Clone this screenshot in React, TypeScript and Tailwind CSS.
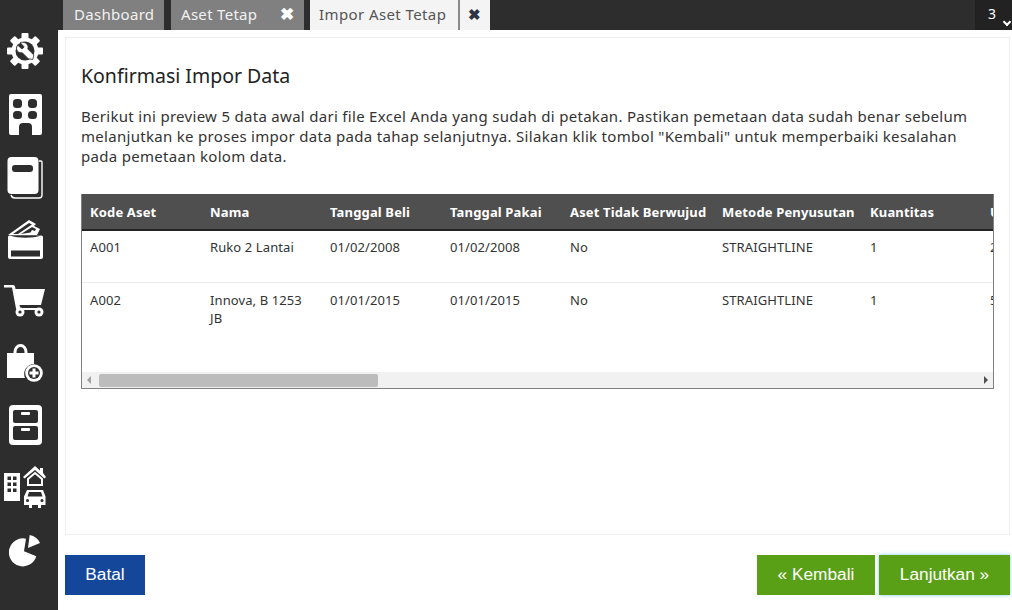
import React from "react";

const W = "#ffffff";
const D = "#2d2d2d";

function Gear() {
  const teeth = [0, 45, 90, 135, 180, 225, 270, 315];
  return (
    <svg width="36" height="36" viewBox="0 0 36 36">
      {teeth.map((a) => (
        <rect key={a} x="14.5" y="0" width="7" height="8" rx="1" fill={W} transform={`rotate(${a} 18 18)`} />
      ))}
      <circle cx="18" cy="18" r="13.500" fill={W} />
      <circle cx="18" cy="18" r="9.500" fill={D} />
      <path d="M10.500 12l4.500 4 2.200-2-4-4.500c3.300-1 7.300.5 7.800 4 .2 1 0 2-.2 2.500l6 6-1 4.500-4.500-.8-6-6c-3 .8-7.800-2-4.800-7.700z" fill={W} stroke={D} strokeWidth="0.8" />
    </svg>
  );
}
function Building() {
  return (
    <svg width="33" height="41" viewBox="0 0 33 41">
      <path d="M2 0h29a2 2 0 0 1 2 2v37a2 2 0 0 1-2 2h-8V33a4 4 0 0 0-4-4h-5a4 4 0 0 0-4 4v8H2a2 2 0 0 1-2-2V2a2 2 0 0 1 2-2z" fill={W} />
      <rect x="4" y="5" width="9" height="9" rx="3.500" fill={D} />
      <rect x="19" y="5" width="9" height="9" rx="3.500" fill={D} />
      <rect x="4" y="17" width="9" height="8" rx="3.500" fill={D} />
      <rect x="19" y="17" width="9" height="8" rx="3.500" fill={D} />
    </svg>
  );
}
function Book() {
  return (
    <svg width="36" height="42" viewBox="0 0 36 42">
      <path d="M32 4h2a1 1 0 0 1 1 1v33a3 3 0 0 1-3 3H8a4 4 0 0 1-4-3" fill="none" stroke={W} strokeWidth="1.400" />
      <rect x="0.500" y="0" width="31" height="37" rx="4" fill={W} />
      <rect x="5" y="8" width="21" height="7" rx="3" fill={D} />
    </svg>
  );
}
function Wallet() {
  return (
    <svg width="35" height="39" viewBox="0 0 35 39">
      <path d="M0 15L21 0l7 4-2 2 6 3-3 6z" fill={W} />
      <path d="M5 14L21 3l3 1.500L10 14z" fill={D} />
      <path d="M13 14l11-7 4 2-1 2-3-1-1.500 2.500z" fill={D} />
      <path d="M1.500 15.500h32a1.500 1.500 0 0 1 1.500 1.500v20a2 2 0 0 1-2 2H2a2 2 0 0 1-2-2V17a1.500 1.500 0 0 1 1.500-1.500z" fill={W} />
      <path d="M2 15.500c8 3 23 3 31 0" fill={D} />
      <rect x="3" y="30.500" width="29" height="6" fill={D} />
    </svg>
  );
}
function Cart() {
  return (
    <svg width="42" height="32" viewBox="0 0 42 32">
      <path d="M0 0h9a2 2 0 0 1 2 1.500L11.500 4H41l-4 16H15.500l.7 3H36v2H14a2 2 0 0 1-2-1.500L8 2.500H0z" fill={W} />
      <circle cx="16" cy="27" r="4.500" fill={W} />
      <circle cx="16" cy="27" r="1.600" fill={D} />
      <circle cx="35" cy="27" r="4.500" fill={W} />
      <circle cx="35" cy="27" r="1.600" fill={D} />
    </svg>
  );
}
function BagPlus() {
  return (
    <svg width="36" height="39" viewBox="0 0 36 39">
      <path d="M8 12V9a5.500 6.500 0 0 1 11 0v3" fill="none" stroke={W} strokeWidth="3" />
      <path d="M0 10h27v11a10 10 0 0 0-9 14H0z" fill={W} />
      <circle cx="27" cy="30" r="8.800" fill={W} />
      <circle cx="27" cy="30" r="6" fill={D} />
      <path d="M25.500 25.500h3v3h3v3h-3v3h-3v-3h-3v-3h3z" fill={W} />
    </svg>
  );
}
function Cabinet() {
  return (
    <svg width="33" height="40" viewBox="0 0 33 40">
      <rect x="0" y="0" width="33" height="40" rx="4" fill={W} />
      <rect x="4" y="5" width="25" height="13" rx="2" fill={D} />
      <rect x="4" y="21" width="25" height="14" rx="2" fill={D} />
      <rect x="12" y="7" width="9" height="3" rx="1" fill={W} />
      <rect x="12" y="23" width="9" height="3" rx="1" fill={W} />
    </svg>
  );
}
function Assets() {
  return (
    <svg width="42" height="42" viewBox="0 0 42 42">
      <rect x="0" y="7" width="16" height="28" fill={W} />
      {[0, 1, 2].map((r) => [0, 1].map((c) => <rect key={`${r}${c}`} x={3.500 + c * 5.500} y={10.500 + r * 6} width="3.500" height="3.500" fill={D} />))}
      <path d="M19 11L31 0l5 4.500V2h3v5l3 4-1.500 1.500L31 4 20.500 12.500z" fill={W} />
      <path d="M24 13l7-6 7 6v6H24z" fill="none" stroke={W} strokeWidth="2" />
      <path d="M23 24h16l2.500 6.500V39H37v3h-3v-3h-6v3h-3v-3H20v-8.500z" fill={W} />
      <path d="M25 26h12l1.500 4.500h-15z" fill={D} />
      <circle cx="23.500" cy="34.500" r="1.500" fill={D} />
      <circle cx="38" cy="34.500" r="1.500" fill={D} />
    </svg>
  );
}
function Pie() {
  return (
    <svg width="32" height="32" viewBox="0 0 32 32">
      <path d="M17 3.700L15 16.300l12.300 5A14 14 0 1 1 17 3.700z" fill={W} />
      <path d="M19 13L20.700 0A14 14 0 0 1 31 8z" fill={W} />
    </svg>
  );
}

const cols = [
  { w: "w-[120px]", h: "Kode Aset" },
  { w: "w-[120px]", h: "Nama" },
  { w: "w-[120px]", h: "Tanggal Beli" },
  { w: "w-[120px]", h: "Tanggal Pakai" },
  { w: "w-[152px]", h: "Aset Tidak Berwujud" },
  { w: "w-[148px]", h: "Metode Penyusutan" },
  { w: "w-[120px]", h: "Kuantitas" },
  { w: "w-[100px]", h: "Umur" },
];
const rows = [
  { c: "h-[52px] border-b border-[#ececec]", d: "pt-[7px]", v: ["A001", "Ruko 2 Lantai", "01/02/2008", "01/02/2008", "No", "STRAIGHTLINE", "1", "20"] },
  { c: "h-[90px]", d: "pt-[8px]", v: ["A002", "Innova, B 1253 JB", "01/01/2015", "01/01/2015", "No", "STRAIGHTLINE", "1", "5"] },
];

export default function App() {
  return (
    <div className="flex h-[610px] w-[1012px] overflow-hidden bg-[#2d2d2d] font-['Noto_Sans',sans-serif]">
      <aside className="flex w-[58px] shrink-0 flex-col items-center pr-[8px] pt-[33px]">
        <div className="flex h-[36px] items-center"><Gear /></div>
        <div className="mt-[25px] flex h-[41px] items-center"><Building /></div>
        <div className="mt-[22px] flex h-[42px] items-center"><Book /></div>
        <div className="mt-[21px] flex h-[39px] items-center"><Wallet /></div>
        <div className="mt-[26px] flex h-[32px] items-center"><Cart /></div>
        <div className="mt-[26px] flex h-[39px] items-center"><BagPlus /></div>
        <div className="mt-[23px] flex h-[40px] items-center"><Cabinet /></div>
        <div className="mt-[21px] flex h-[42px] items-center"><Assets /></div>
        <div className="mt-[27px] flex h-[32px] items-center"><Pie /></div>
      </aside>
      <div className="flex min-w-0 flex-1 flex-col">
        <header className="flex h-[30px] shrink-0 items-stretch pl-[5px] text-[15px] leading-[28px] tracking-[0.3px]">
          <div className="w-[101px] bg-[#808080] pl-[11px] text-[#f2f2f2]">Dashboard</div>
          <div className="ml-[7px] flex w-[133px] justify-between bg-[#808080] pl-[10px] pr-[10px] text-[#f2f2f2]">
            <span>Aset Tetap</span>
            <span className="text-[17px] font-bold text-white">✖</span>
          </div>
          <div className="ml-[6px] w-[150px] border-r-2 border-[#8a8a8a] bg-[#f4f4f4] pl-[9px] tracking-[0.4px] text-[#555555]">Impor Aset Tetap</div>
          <div className="w-[30px] bg-[#f4f4f4] text-center text-[15px] font-bold text-[#2f3342]">✖</div>
          <div className="flex-1" />
          <div className="relative w-[37px] bg-[#222222] pl-[13px] text-[14px] text-white">
            3
            <span className="absolute bottom-[4px] right-[2px] h-[6px] w-[6px] -translate-y-[1px] rotate-45 border-b-2 border-r-2 border-white" />
          </div>
        </header>
        <main className="flex min-h-0 flex-1 flex-col bg-white pl-[7px] pr-[2px] pt-[7px]">
          <section className="h-[498px] shrink-0 border border-[#eeeeee] px-[15px] pt-[23px]">
            <h1 className="text-[19.500px] leading-[30px] text-[#222222]">Konfirmasi Impor Data</h1>
            <p className="mt-[15px] w-[900px] text-[15px] leading-[20px] tracking-[0.3px] text-[#333333]">
              Berikut ini preview 5 data awal dari file Excel Anda yang sudah di petakan. Pastikan pemetaan data sudah benar sebelum melanjutkan ke proses impor data pada tahap selanjutnya. Silakan klik tombol "Kembali" untuk memperbaiki kesalahan pada pemetaan kolom data.
            </p>
            <div className="mt-[28px] w-[913px] overflow-hidden border border-t-0 border-[#808080]">
              <div className="overflow-hidden">
                <table className="w-[1000px] table-fixed border-collapse text-left text-[13px] text-[#333333]">
                  <colgroup>
                    {cols.map((c) => <col key={c.h} className={c.w} />)}
                  </colgroup>
                  <thead>
                    <tr className="h-[36px] border-b-2 border-[#222222] bg-[#4f4f4f] text-white">
                      {cols.map((c) => (
                        <th key={c.h} className="whitespace-nowrap px-[8px] pt-[2px] text-[13px] font-bold tracking-[0.15px]">{c.h}</th>
                      ))}
                    </tr>
                  </thead>
                  <tbody>
                    {rows.map((r) => (
                      <tr key={r.v[0]} className={r.c}>
                        {r.v.map((v, i) => (
                          <td key={i} className={`${r.d} px-[8px] align-top text-[13px] leading-[18px] tracking-[0.1px]`}>{v}</td>
                        ))}
                      </tr>
                    ))}
                  </tbody>
                </table>
              </div>
              <div className="flex h-[16px] items-center bg-[#f1f1f1] px-[5px]">
                <span className="h-0 w-0 border-y-[4px] border-r-[4px] border-y-transparent border-r-[#a0a0a0]" />
                <span className="ml-[8px] h-[13px] w-[279px] rounded-[2px] bg-[#bcbcbc]" />
                <span className="flex-1" />
                <span className="h-0 w-0 border-y-[4px] border-l-[4px] border-y-transparent border-l-[#505050]" />
              </div>
            </div>
          </section>
          <footer className="flex items-start justify-between pt-[20px] font-['Liberation_Sans',sans-serif] text-[17.300px] text-white">
            <button className="flex h-[40px] w-[80px] items-center justify-center bg-[#14479a]">Batal</button>
            <div className="flex gap-[4px]">
              <button className="flex h-[40px] w-[118px] items-center justify-center bg-[#5aa016]">« Kembali</button>
              <button className="flex h-[40px] w-[131px] items-center justify-center bg-[#5aa016] shadow-[0_0_4px_#7fd0ea]">Lanjutkan »</button>
            </div>
          </footer>
        </main>
      </div>
    </div>
  );
}
